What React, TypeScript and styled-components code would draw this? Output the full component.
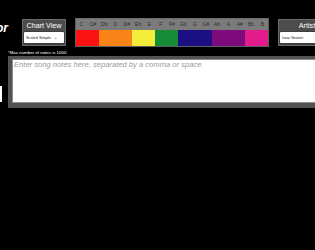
import React from "react";
import styled, { createGlobalStyle } from "styled-components";

const GlobalStyle = createGlobalStyle`
  html, body {
    margin: 0;
    padding: 0;
    background: #000;
    overflow: hidden;
    font-family: "Liberation Sans", Arial, sans-serif;
  }
`;

const Page = styled.div`
  padding: 18px 8px 0;
  width: 340px;
`;

const Header = styled.header`
  display: flex;
  align-items: flex-start;
  gap: 9px;
`;

// title runs off the left edge of the window, only its tail shows
const TitleCell = styled.div`
  width: 0;
  min-width: 0;
  flex: none;
  display: flex;
  justify-content: flex-end;
  margin-right: 5px;
  padding-top: 3px;
`;

const Title = styled.h1`
  margin: 0;
  white-space: nowrap;
  color: #fff;
  font-size: 12px;
  font-weight: bold;
  font-style: italic;
`;

const Panel = styled.div<{ $width: number }>`
  width: ${(p) => p.$width}px;
  flex: none;
  margin-top: 1px;
  background: #3f3f3f;
  border: 1px solid #6a6a6a;
  box-sizing: border-box;
  display: flex;
  flex-direction: column;
  padding-bottom: 2px;
`;

const PanelTitle = styled.div`
  height: 11px;
  line-height: 11px;
  background: #4d4d4d;
  color: #fff;
  font-size: 7.2px;
  text-align: center;
`;

const SelectBox = styled.div`
  margin: 1px 1px 0;
  height: 11px;
  background: #fff;
  border-radius: 1px;
  display: flex;
  align-items: center;
  gap: 3px;
  padding: 0 2px;
  color: #222;
  font-size: 3.9px;
`;

const Arrow = styled.span`
  font-size: 4px;
  color: #444;
`;

const TextBox = styled.div`
  margin: 1px 1px 0;
  height: 11px;
  background: #fff;
  border-radius: 1px;
  display: flex;
  align-items: center;
  padding: 0 2px;
  color: #222;
  font-size: 3.5px;
`;

const ColorBar = styled.div`
  width: 194px;
  flex: none;
  display: grid;
  grid-template-columns: repeat(17, 1fr);
  grid-template-rows: 11px 16px;
  border: 1px solid #5e5e5e;
  border-top-color: #6a6a6a;
  box-sizing: border-box;
`;

const NoteLabel = styled.div`
  background: #7b7b7b;
  color: #2f2f2f;
  font-size: 5px;
  line-height: 11px;
  text-align: center;
`;

const Swatch = styled.div<{ $span: number; $color: string }>`
  grid-column: span ${(p) => p.$span};
  background: ${(p) => p.$color};
`;

const Main = styled.main`
  display: flex;
  align-items: flex-start;
  margin-top: 3px;
`;

const SideCell = styled.div`
  width: 0;
  min-width: 0;
  flex: none;
  display: flex;
  justify-content: flex-end;
  margin-top: 36px;
`;

const SideButton = styled.button`
  width: 40px;
  height: 16px;
  margin-right: 6px;
  border: none;
  background: #fff;
  flex: none;
`;

const NotesColumn = styled.div`
  display: flex;
  flex-direction: column;
`;

const Hint = styled.div`
  color: #fff;
  font-size: 4.4px;
  line-height: 6px;
  height: 6px;
`;

const NotesFrame = styled.div`
  width: 330px;
  background: #535353;
  padding: 3px 4px 5px;
  box-sizing: border-box;
`;

const NotesInput = styled.textarea`
  display: block;
  width: 100%;
  height: 44px;
  box-sizing: border-box;
  border: 1px solid #8c8c8c;
  resize: none;
  padding: 0 1px;
  font-family: "Liberation Sans", Arial, sans-serif;
  font-size: 7.6px;
  outline: none;
  &::placeholder {
    color: #9a9a9a;
    font-style: italic;
  }
`;

const notes = ["C", "C#", "Db", "D", "D#", "Eb", "E", "F", "F#", "Gb", "G", "G#", "Ab", "A", "A#", "Bb", "B"];

const swatches = [
  { span: 2, color: "#fb1313" },
  { span: 3, color: "#fb8418" },
  { span: 2, color: "#f4ee3a" },
  { span: 2, color: "#168c36" },
  { span: 3, color: "#1b0f83" },
  { span: 3, color: "#7e0b7b" },
  { span: 2, color: "#e41b8b" },
];

export default function App() {
  return (
    <>
      <GlobalStyle />
      <Page>
        <Header>
          <TitleCell>
            <Title>Music to Color</Title>
          </TitleCell>
          <Panel $width={44}>
            <PanelTitle>Chart View</PanelTitle>
            <SelectBox>
              Scaled Simple <Arrow>⌄</Arrow>
            </SelectBox>
          </Panel>
          <ColorBar>
            {notes.map((n) => (
              <NoteLabel key={n}>{n}</NoteLabel>
            ))}
            {swatches.map((s) => (
              <Swatch key={s.color} $span={s.span} $color={s.color} />
            ))}
          </ColorBar>
          <Panel $width={58}>
            <PanelTitle>Artist</PanelTitle>
            <TextBox>Isaac Newton</TextBox>
          </Panel>
        </Header>
        <Main>
          <SideCell>
            <SideButton />
          </SideCell>
          <NotesColumn>
            <Hint>*Max number of notes is 1000</Hint>
            <NotesFrame>
              <NotesInput placeholder="Enter song notes here, separated by a comma or space." />
            </NotesFrame>
          </NotesColumn>
        </Main>
      </Page>
    </>
  );
}
